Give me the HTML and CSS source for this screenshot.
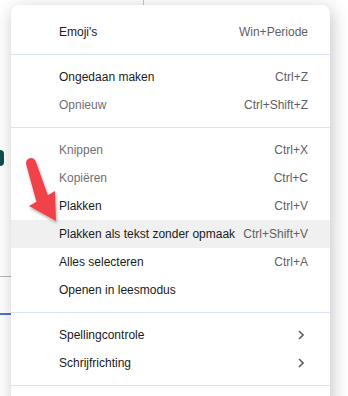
FILE: index.html
```html
<!DOCTYPE html>
<html lang="nl">
<head>
  <meta charset="UTF-8" />
  <title>Contextmenu</title>
  <link rel="stylesheet" href="styles.css">
</head>
<body>
  <div class="page">
    <div class="page-rule"></div>
    <div class="page-glyph"></div>
    <div class="page-line"></div>
    <div class="page-link"></div>
  </div>

  <div class="menu">
    <div class="item"><span>Emoji's</span><span class="key">Win+Periode</span></div>
    <div class="sep"></div>
    <div class="item"><span>Ongedaan maken</span><span class="key">Ctrl+Z</span></div>
    <div class="item off"><span>Opnieuw</span><span class="key">Ctrl+Shift+Z</span></div>
    <div class="sep"></div>
    <div class="item off"><span>Knippen</span><span class="key">Ctrl+X</span></div>
    <div class="item off"><span>Kopiëren</span><span class="key">Ctrl+C</span></div>
    <div class="item"><span>Plakken</span><span class="key">Ctrl+V</span></div>
    <div class="item hover"><span>Plakken als tekst zonder opmaak</span><span class="key">Ctrl+Shift+V</span></div>
    <div class="item"><span>Alles selecteren</span><span class="key">Ctrl+A</span></div>
    <div class="item"><span>Openen in leesmodus</span></div>
    <div class="sep"></div>
    <div class="item">
      <span>Spellingcontrole</span>
      <svg class="chev" width="6" height="10" viewBox="0 0 6 10"><polyline points="1,1 5,5 1,9" /></svg>
    </div>
    <div class="item">
      <span>Schrijfrichting</span>
      <svg class="chev" width="6" height="10" viewBox="0 0 6 10"><polyline points="1,1 5,5 1,9" /></svg>
    </div>
    <div class="sep"></div>
  </div>

  <!-- annotation arrow drawn over the menu -->
  <svg class="arrow" width="70" height="80" viewBox="0 0 70 80">
    <defs>
      <filter id="drop" x="-30%" y="-30%" width="160%" height="160%">
        <feDropShadow dx="1" dy="2" stdDeviation="1.5" flood-color="#000" flood-opacity="0.35" />
      </filter>
    </defs>
    <g filter="url(#drop)" fill="#f0424b">
      <path d="M6.2 14.5 A5 5 0 0 1 15.8 11.5 L28.7 47.5 L16.3 51.5 Z" />
      <polygon points="9,56 35,41 36,71" />
    </g>
  </svg>
</body>
</html>
```

FILE: styles.css
```css
body {
  margin: 0;
  width: 348px;
  height: 396px;
  overflow: hidden;
  background: #fff;
  font-family: 'Liberation Sans', Arial, sans-serif;
  position: relative;
}

.page {
  height: 396px;
  background: #fff;
}

.page-rule {
  margin-left: 143px;
  width: 1px;
  height: 6px;
  background: #c8c8c8;
}

.page-glyph {
  margin-top: 144px;
  width: 4px;
  height: 16px;
  background: #0f4f4c;
  border-radius: 0 4px 4px 0;
}

.page-line {
  margin-top: 110px;
  width: 12px;
  height: 1px;
  background: #b5b5b5;
}

.page-link {
  margin-top: 36px;
  width: 12px;
  height: 2px;
  background: #4a74d6;
}

.menu {
  position: absolute;
  left: 11px;
  top: 5px;
  width: 319px;
  height: 420px;
  padding-top: 13px;
  background: #fff;
  border-radius: 8px 8px 0 0;
  box-shadow: 2px 4px 18px rgba(0, 0, 0, 0.24);
  font-size: 12px;
  color: #1b1b1b;
}

.item {
  height: 28px;
  display: flex;
  align-items: center;
  justify-content: space-between;
  padding: 0 22px 0 48px;
}

.item.off {
  color: #6f6f78;
}

.item.hover {
  background: #f0f0f0;
}

.key {
  color: #5f6066;
}

.chev {
  margin-right: 4px;
  fill: none;
  stroke: #5f6368;
  stroke-width: 1.6;
}

.sep {
  height: 1px;
  margin: 8px 0;
  background: #d9e3f4;
}

.arrow {
  position: absolute;
  left: 20px;
  top: 150px;
}
```
